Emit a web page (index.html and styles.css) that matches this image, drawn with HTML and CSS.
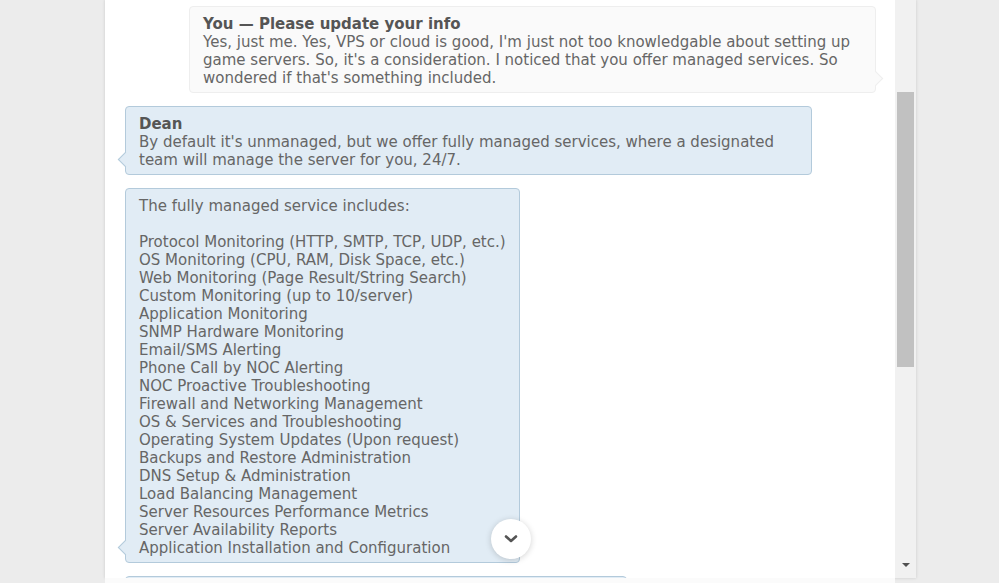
FILE: index.html
```html
<!DOCTYPE html>
<html lang="en">
<head>
    <meta charset="UTF-8">
    <meta name="viewport" content="width=device-width, initial-scale=1.0">
    <title>Chat transcript</title>
    <link rel="stylesheet" href="styles.css">
</head>
<body>
    <div class="panel">
        <div class="chat">
            <div class="log">
                <div class="msg msg-you">
                    <div class="author">You — Please update your info</div>
                    <div class="text">Yes, just me. Yes, VPS or cloud is good, I'm just not too knowledgable about setting up game servers. So, it's a consideration. I noticed that you offer managed services. So wondered if that's something included.</div>
                </div>

                <div class="msg msg-agent">
                    <div class="author">Dean</div>
                    <div class="text">By default it's unmanaged, but we offer fully managed services, where a designated team will manage the server for you, 24/7.</div>
                </div>

                <div class="msg msg-agent msg-list">
                    <div class="text">The fully managed service includes:

Protocol Monitoring (HTTP, SMTP, TCP, UDP, etc.)
OS Monitoring (CPU, RAM, Disk Space, etc.)
Web Monitoring (Page Result/String Search)
Custom Monitoring (up to 10/server)
Application Monitoring
SNMP Hardware Monitoring
Email/SMS Alerting
Phone Call by NOC Alerting
NOC Proactive Troubleshooting
Firewall and Networking Management
OS &amp; Services and Troubleshooting
Operating System Updates (Upon request)
Backups and Restore Administration
DNS Setup &amp; Administration
Load Balancing Management
Server Resources Performance Metrics
Server Availability Reports
Application Installation and Configuration</div>
                </div>

                <div class="msg msg-agent msg-next">
                    <div class="text">&nbsp;</div>
                </div>
            </div>

            <button class="scroll-down" title="Scroll to bottom">
                <svg width="14" height="10" viewBox="0 0 14 10">
                    <path d="M2 2.5 L7 7 L12 2.5" fill="none" stroke="#555" stroke-width="2.6" stroke-linecap="round" stroke-linejoin="round"/>
                </svg>
            </button>
        </div>

        <div class="scrollbar">
            <div class="thumb"></div>
            <div class="arrow-down"></div>
        </div>
    </div>
    <div class="composer"></div>
</body>
</html>
```

FILE: styles.css
```css
body {
    margin: 0;
    height: 583px;
    overflow: hidden;
    background-color: #ececec;
    font-family: 'DejaVu Sans', Verdana, sans-serif;
    font-size: 15px;
    line-height: 18px;
    color: #666;
}

.panel {
    display: flex;
    width: 811px;
    height: 578px;
    margin-left: 105px;
    background-color: #fff;
    box-shadow: 0 0 3px rgba(0, 0, 0, 0.15);
}

.composer {
    width: 790px;
    height: 5px;
    margin-left: 105px;
    background-color: #fbfbfb;
}

.chat {
    position: relative;
    flex: 1;
    overflow: hidden;
}

.log {
    display: flex;
    flex-direction: column;
    align-items: flex-start;
    gap: 13px;
    padding: 6px 19px 0 20px;
}

.msg {
    position: relative;
    max-width: 659px;
    padding: 8px 13px 5px;
    border: 1px solid #b3cadb;
    border-radius: 4px;
    background-color: #e1ecf5;
}

.msg::before {
    content: '';
    position: absolute;
    left: -6px;
    bottom: 9px;
    width: 10px;
    height: 10px;
    border-left: 1px solid #b3cadb;
    border-bottom: 1px solid #b3cadb;
    background-color: inherit;
    transform: rotate(45deg);
}

.msg-you {
    align-self: flex-end;
    border-color: #eee;
    background-color: #fafafa;
}

.msg-you::before {
    left: auto;
    right: -6px;
    bottom: 8px;
    border: none;
    border-top: 1px solid #eee;
    border-right: 1px solid #eee;
}

.msg-next::before {
    display: none;
}

.msg-next {
    width: 474px;
}

.author {
    font-weight: bold;
    color: #555;
}

.text {
    white-space: pre-line;
}

.scroll-down {
    position: absolute;
    left: 386px;
    top: 519px;
    width: 40px;
    height: 40px;
    padding: 0;
    border: none;
    border-radius: 50%;
    background-color: #fff;
    box-shadow: 0 1px 6px rgba(0, 0, 0, 0.18);
    display: flex;
    align-items: center;
    justify-content: center;
    cursor: pointer;
}

.scrollbar {
    display: flex;
    flex-direction: column;
    width: 21px;
    padding: 92px 2px 0;
    box-sizing: border-box;
    background-color: #f1f1f1;
}

.thumb {
    height: 275px;
    background-color: #c1c1c1;
}

.arrow-down {
    margin: auto auto 11px;
    width: 0;
    height: 0;
    border-left: 4px solid transparent;
    border-right: 4px solid transparent;
    border-top: 4px solid #505050;
}
```
